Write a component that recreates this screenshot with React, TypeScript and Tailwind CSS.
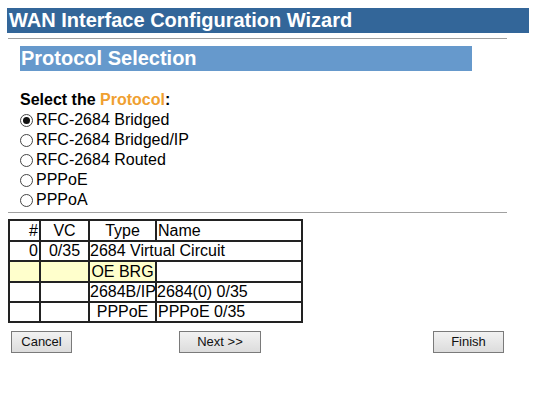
import React from "react";

function Radio({ checked, label }: { checked?: boolean; label: string }) {
  return (
    <div className="flex items-center h-[20px]">
      <span className="w-[13px] h-[13px] rounded-full border border-[#444] bg-white flex items-center justify-center mr-[3px] ml-[1px]">
        {checked && <span className="w-[7px] h-[7px] rounded-full bg-[#111]" />}
      </span>
      <span>{label}</span>
    </div>
  );
}

function Btn({ label, w }: { label: string; w: string }) {
  return (
    <button
      className={`${w} h-[22px] border border-[#7a7a7a] bg-gradient-to-b from-[#f2f2f2] to-[#dcdcdc] text-[13px] text-[#111] leading-[20px] p-0`}
    >
      {label}
    </button>
  );
}

export default function App() {
  const td = "border-2 border-[#222] p-0 leading-[16px]";
  return (
    <div className="w-[539px] h-[402px] bg-white text-black font-['Liberation_Sans',Arial,sans-serif] text-[16px] overflow-hidden">
      <div className="pt-[8px] pl-[7px]">
        <div className="w-[522px] h-[25px] bg-[#336699] text-white font-bold text-[20px] leading-[25px] pl-[2px]">
          WAN Interface Configuration Wizard
        </div>
      </div>
      <div className="ml-[8px] mt-[5px] w-[499px] h-[1px] bg-[#a0a0a0]" />
      <div className="ml-[20px] mt-[7px] w-[452px] h-[25px] bg-[#6699cc] text-white font-bold text-[20px] leading-[25px] pl-[1px]">
        Protocol Selection
      </div>
      <div className="ml-[19px] mt-[19px] leading-[20px]">
        <div className="font-bold h-[20px] pl-[1px]">
          Select the <span className="text-[#f0a030]">Protocol</span>:
        </div>
        <Radio checked label="RFC-2684 Bridged" />
        <Radio label="RFC-2684 Bridged/IP" />
        <Radio label="RFC-2684 Routed" />
        <Radio label="PPPoE" />
        <Radio label="PPPoA" />
      </div>
      <div className="ml-[8px] mt-[2px] w-[499px] h-[1px] bg-[#a0a0a0]" />
      <table className="ml-[8px] mt-[6px] border-collapse border-2 border-[#222] w-[293px] table-fixed">
        <colgroup>
          <col className="w-[31px]" />
          <col className="w-[49px]" />
          <col className="w-[67px]" />
          <col className="w-[146px]" />
        </colgroup>
        <tbody>
          <tr className="h-[21px]">
            <td className={`${td} text-right pr-[1px]`}>#</td>
            <td className={`${td} text-center`}>VC</td>
            <td className={`${td} text-center`}>Type</td>
            <td className={`${td} text-left pl-[1px]`}>Name</td>
          </tr>
          <tr className="h-[20px]">
            <td className={`${td} text-right pr-[1px]`}>0</td>
            <td className={`${td} text-center`}>0/35</td>
            <td className={`${td} text-left whitespace-nowrap`} colSpan={2}>
              2684 Virtual Circuit
            </td>
          </tr>
          <tr className="h-[21px]">
            <td className={`${td} bg-[#ffffcc]`}></td>
            <td className={`${td} bg-[#ffffcc]`}></td>
            <td className={`${td} bg-[#ffffcc] text-center`}>OE BRG</td>
            <td className={`${td}`}></td>
          </tr>
          <tr className="h-[20px]">
            <td className={`${td}`}></td>
            <td className={`${td}`}></td>
            <td className={`${td} text-center whitespace-nowrap`}>2684B/IP</td>
            <td className={`${td} text-left`}>2684(0) 0/35</td>
          </tr>
          <tr className="h-[20px]">
            <td className={`${td}`}></td>
            <td className={`${td}`}></td>
            <td className={`${td} text-center`}>PPPoE</td>
            <td className={`${td} text-left pl-[1px]`}>PPPoE 0/35</td>
          </tr>
        </tbody>
      </table>
      <div className="flex mt-[8px] pl-[11px]">
        <Btn label="Cancel" w="w-[61px]" />
        <div className="w-[107px]" />
        <Btn label="Next >>" w="w-[82px]" />
        <div className="w-[172px]" />
        <Btn label="Finish" w="w-[71px]" />
      </div>
    </div>
  );
}
